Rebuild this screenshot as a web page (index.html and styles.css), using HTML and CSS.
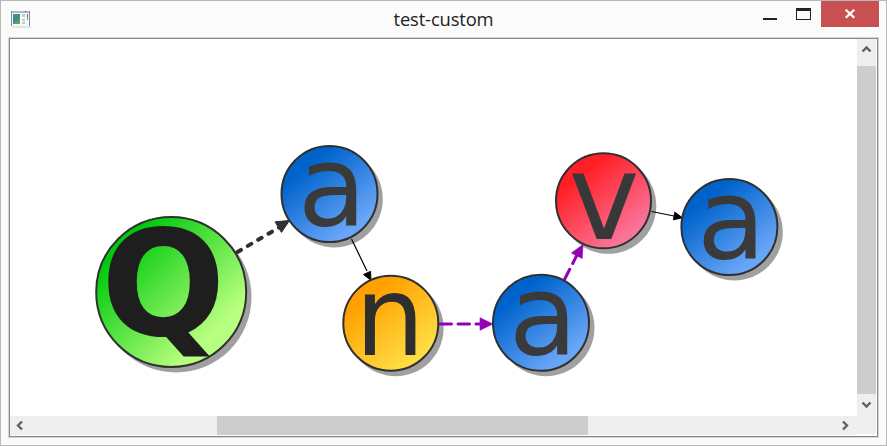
FILE: index.html
```
<!DOCTYPE html>
<html lang="en">
<head>
<meta charset="utf-8">
<title>test-custom</title>
<link rel="stylesheet" href="styles.css">
</head>
<body>
<div class="window">
  <header class="titlebar">
    <svg class="app-icon" width="20" height="18" viewBox="0 0 20 18" shape-rendering="crispEdges">
      <defs><linearGradient id="pic" x1="0" y1="0" x2=".6" y2="1"><stop offset="0" stop-color="#5c86ad"/><stop offset=".5" stop-color="#3b8a88"/><stop offset="1" stop-color="#55ad5c"/></linearGradient></defs>
      <rect x="1" y="15" width="19" height="2" fill="#e4e4e4"/>
      <rect x="0" y="0" width="19" height="15" fill="#7f8c96"/>
      <rect x="1" y="0" width="17" height="2" fill="#aebbc1"/>
      <rect x="14" y="0" width="1" height="1" fill="#4b5963"/>
      <rect x="1" y="2" width="17" height="13" fill="#f8f8f8"/>
      <rect x="2" y="3" width="7" height="10" fill="url(#pic)"/>
      <path d="M11 3h3v3h-3zM11 8h3v2h-3zM11 11h3v2h-3z" fill="#c8c8c8"/>
      <rect x="16" y="3" width="1" height="3" fill="#48719a"/>
      <rect x="16" y="6" width="1" height="3" fill="#53b160"/>
    </svg>
    <h1 class="title">test-custom</h1>
    <div class="controls">
      <svg class="minmax" width="81" height="27" viewBox="0 0 81 27" shape-rendering="crispEdges">
        <path d="M23 18h14v2H23z" fill="#242021"/>
        <path fill-rule="evenodd" d="M56 8h15v12H56zM57 11v8h13v-8z" fill="#242021"/>
      </svg>
      <button class="close" aria-label="Close">
        <svg width="12" height="10" viewBox="0 0 12 10"><path d="M1.7 .7L10.3 8.8M10.3 .7L1.7 8.8" stroke="#fff" stroke-width="2.2"/></svg>
      </button>
    </div>
  </header>
  <main class="view">
    <svg class="scene" width="847" height="377" viewBox="10 39 847 377">
      <defs>
        <linearGradient id="green" x1=".15" y1=".15" x2=".77" y2=".77"><stop offset=".05" stop-color="#00c90d"/><stop offset="1" stop-color="#b7ff7e"/></linearGradient>
        <linearGradient id="blue" x1=".2" y1=".15" x2=".75" y2=".85"><stop offset=".1" stop-color="#0063cc"/><stop offset="1" stop-color="#69a6f8"/></linearGradient>
        <linearGradient id="orange" x1=".2" y1=".15" x2=".75" y2=".85"><stop offset=".1" stop-color="#ffa000"/><stop offset="1" stop-color="#ffdc42"/></linearGradient>
        <linearGradient id="red" x1=".2" y1=".15" x2=".75" y2=".85"><stop offset=".1" stop-color="#ff1f25"/><stop offset="1" stop-color="#fa7398"/></linearGradient>
      </defs>
      <g class="shadows">
        <circle cx="176" cy="297" r="75.5"/>
        <circle cx="334.3" cy="199" r="48.5"/>
        <circle cx="395.6" cy="328.2" r="48"/>
        <circle cx="546" cy="327.8" r="48.5"/>
        <circle cx="608.3" cy="205.8" r="48"/>
        <circle cx="734.3" cy="232" r="48.5"/>
      </g>
      <g class="dotted"><path class="line" d="M237.5 252L279 227.5"/><path class="head" d="M289.5 220.5L275 221.8L281.5 232.4z"/></g>
      <g class="thin"><path class="line" d="M351.5 239L367 271"/><path class="head" d="M371 280.5L363.4 274.5L370.6 271.2z"/></g>
      <g class="dashed"><path class="line" d="M440 324H482"/><path class="head" d="M493 324L480 317.8V330.2z"/></g>
      <g class="dashed"><path class="line" d="M564.5 279.5L577.5 254"/><path class="head" d="M583 244.5L571.4 253L582.2 258.5z"/></g>
      <g class="thin"><path class="line" d="M651.5 211.5L674 216"/><path class="head" d="M682.6 217.8L673.3 219.9L674.7 212z"/></g>
      <g class="nodes">
        <circle cx="171.2" cy="292" r="75" fill="url(#green)"/>
        <circle cx="329.5" cy="194" r="48" fill="url(#blue)"/>
        <circle cx="390.8" cy="323.2" r="47.5" fill="url(#orange)"/>
        <circle cx="541" cy="322.8" r="48" fill="url(#blue)"/>
        <circle cx="603.5" cy="200.8" r="47.5" fill="url(#red)"/>
        <circle cx="729.4" cy="227" r="48" fill="url(#blue)"/>
      </g>
      <g class="letters">
        <text class="letter-q" x="100.9" y="334.9">Q</text>
        <text class="letter-a" x="297.7" y="225">a</text>
        <text class="letter-n" x="355" y="355">n</text>
        <text class="letter-a" x="508.8" y="354">a</text>
        <text class="letter-v" x="568.4" y="239">v</text>
        <text class="letter-a" x="697" y="258">a</text>
      </g>
    </svg>
    <div class="vscroll">
      <svg class="arrow-v" width="19" height="27" viewBox="0 0 19 27"><path d="M5.5 12.5L9.5 8.5L13.5 12.5"/></svg>
      <div class="vthumb"></div>
      <svg class="arrow-v" width="19" height="22" viewBox="0 0 19 22"><path d="M5.5 8.5L9.5 12.5L13.5 8.5"/></svg>
    </div>
    <div class="hscroll">
      <svg class="arrow-h" width="20" height="19" viewBox="0 0 20 19"><path d="M12 5.5L8 9.5L12 13.5"/></svg>
      <div class="hthumb"></div>
      <svg class="arrow-h" width="20" height="19" viewBox="0 0 20 19"><path d="M6 5.5L10 9.5L6 13.5"/></svg>
    </div>
    <div class="corner"></div>
  </main>
</div>
</body>
</html>
```

FILE: styles.css
```
* { box-sizing: border-box; }
body { margin: 0; overflow: hidden; }
.window {
  width: 887px;
  height: 446px;
  border: 1px solid #b9b9b9;
  background: #fbfbfb;
  padding: 0 7px 7px;
}
.titlebar {
  display: grid;
  grid-template-columns: 139px 1fr 139px;
  height: 36px;
  align-items: start;
}
.app-icon { display: block; margin: 10px 0 0 3px; }
.title {
  margin: 0;
  padding-top: 5px;
  text-align: center;
  font: 400 18.4px/26px "Open Sans", "Noto Sans", sans-serif;
  color: #222;
  letter-spacing: -0.15px;
}
.controls { display: flex; justify-content: flex-end; }
.minmax { display: block; flex: none; margin-top: -1px; }
.close {
  display: flex;
  flex: none;
  width: 58px;
  height: 26px;
  padding: 0 1px 0 0;
  border: 0;
  background: #c75050;
  align-items: center;
  justify-content: center;
}
.view {
  display: grid;
  grid-template-columns: 847px 20px;
  grid-template-rows: 377px 20px;
  width: 869px;
  height: 399px;
  margin: 1px;
  border: 1px solid #828790;
  outline: 1px solid #d5d6d9;
  background: #fff;
}
.scene { display: block; }
.shadows { fill: #a0a0a0; }
.nodes { stroke: #303030; stroke-width: 2; }
.line { fill: none; }
.dotted .line { stroke: #303030; stroke-width: 4; stroke-linecap: round; stroke-dasharray: 4 8; }
.dotted .head { fill: #303030; stroke: #303030; }
.thin .line { stroke: #000; stroke-width: 1.2; }
.thin .head { fill: #000; stroke: #000; stroke-width: 0.8; }
.dashed .line { stroke: #9400b8; stroke-width: 3; stroke-linecap: round; stroke-dasharray: 11.5 6.5; }
.dashed .head { fill: #9400b8; stroke: #9400b8; stroke-width: 0.6; }
.letters { font-family: "DejaVu Sans", sans-serif; }
.letter-q { font-size: 146.5px; font-weight: 700; fill: #1e1e1e; }
.letter-a { font-size: 112px; fill: #3a3a3a; }
.letter-n { font-size: 110px; fill: #2e2e2e; }
.letter-v { font-size: 120px; fill: #383838; }
.vscroll {
  display: flex;
  flex-direction: column;
  width: 19px;
  background: #efefef;
}
.vthumb { flex: 1; background: #cdcdcd; }
.hscroll {
  display: grid;
  grid-template-columns: 20px 1fr 20px;
  height: 19px;
  background: #efefef;
}
.hthumb { width: 371px; margin-left: 187px; background: #cdcdcd; }
.corner { width: 19px; height: 18px; background: #efefef; }
.arrow-v, .arrow-h { display: block; flex: none; fill: none; stroke: #606060; stroke-width: 2.4; }
```
